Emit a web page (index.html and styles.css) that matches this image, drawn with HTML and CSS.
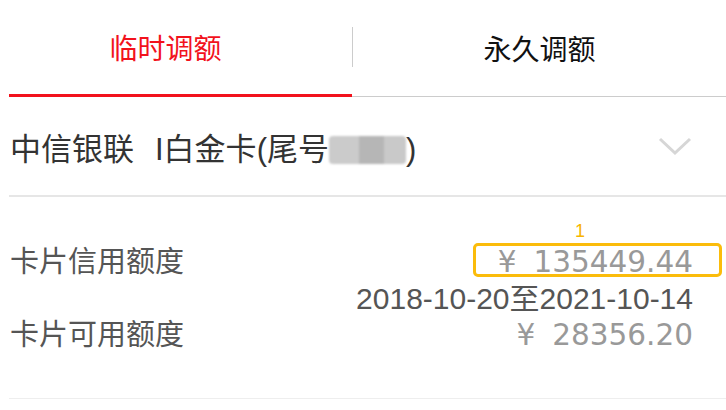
FILE: index.html
```html
<!DOCTYPE html>
<html lang="zh-CN">
<head>
    <meta charset="UTF-8">
    <meta name="viewport" content="width=device-width, initial-scale=1.0">
    <title>调额</title>
    <link rel="stylesheet" href="styles.css">
</head>
<body>
    <div class="tabs">
        <div class="tab tab-active">临时调额</div>
        <div class="tab-divider"></div>
        <div class="tab">永久调额</div>
    </div>

    <div class="card-select">
        <span class="card-name">中信银联<span class="card-level">I白金卡</span>(尾号<span class="card-mask"></span>)</span>
        <svg class="chevron" width="34" height="20" viewBox="0 0 34 20">
            <polyline points="2,3 17,17 32,3" fill="none" stroke="#d6d6d6" stroke-width="3"/>
        </svg>
    </div>

    <div class="limits">
        <div class="limit-label">卡片信用额度</div>
        <div class="limit-value amount"><span class="yen">¥</span>135449.44</div>
        <div class="limit-value date">2018-10-20至2021-10-14</div>
        <div class="limit-label">卡片可用额度</div>
        <div class="limit-value amount"><span class="yen">¥</span>28356.20</div>

        <div class="mark-box"></div>
        <div class="mark-num">1</div>
    </div>
</body>
</html>
```

FILE: styles.css
```css
body {
    margin: 0;
    background: #fff;
    font-family: "Liberation Sans", "Noto Sans CJK SC", sans-serif;
}

/* tabs */
.tabs {
    display: flex;
    height: 97px;
    margin-left: 9px;
    border-bottom: 1px solid #cccccc;
    box-sizing: border-box;
}

.tab {
    display: flex;
    align-items: center;
    justify-content: center;
    flex: 1;
    font-size: 28px;
    color: #111;
}

.tab-active {
    flex: 0 0 343px;
    box-sizing: border-box;
    padding-right: 30px;
    margin-bottom: -1px;
    border-bottom: 3px solid #f2121c;
    color: #f2121c;
}

.tab-divider {
    width: 1px;
    height: 40px;
    margin-top: 27px;
    background: #cccccc;
}

/* card selector */
.card-select {
    display: flex;
    align-items: center;
    justify-content: space-between;
    height: 100px;
    box-sizing: border-box;
    margin-left: 9px;
    padding: 0 34px 0 1px;
    border-bottom: 2px solid #e6e6e6;
}

.card-name {
    font-size: 31px;
    color: #333;
}

.card-level {
    margin-left: 21px;
}

.card-mask {
    display: inline-block;
    width: 77px;
    height: 28px;
    vertical-align: -4px;
    background: linear-gradient(to right, #cbcbcb 0, #cbcbcb 30px, #b6b6b6 30px, #b6b6b6 55px, #c9c9c9 55px);
    border-radius: 4px;
    filter: blur(1.2px);
}

.chevron {
    display: block;
}

/* limits */
.limits {
    position: relative;
    display: grid;
    grid-template-columns: auto 1fr;
    grid-template-rows: repeat(3, 36.5px);
    align-items: center;
    margin-left: 9px;
    padding: 47px 33px 44px 1px;
    border-bottom: 1px solid #eeeeee;
}

.limit-label {
    font-size: 29px;
    line-height: 36.5px;
    color: #555;
}

.limit-value {
    text-align: right;
    font-size: 30px;
    line-height: 36.5px;
}

.amount {
    font-family: "DejaVu Sans", sans-serif;
    font-size: 29.5px;
    color: #999;
}

.yen {
    margin-right: 17px;
}

.date {
    grid-column: 2;
    color: #555;
}

.mark-box {
    position: absolute;
    left: 464px;
    top: 46px;
    width: 249px;
    height: 34px;
    box-sizing: border-box;
    border: 3px solid #fbbc0b;
    border-radius: 5px;
}

.mark-num {
    position: absolute;
    left: 566px;
    top: 25px;
    font-size: 18px;
    line-height: 18px;
    color: #f7b500;
}
```
